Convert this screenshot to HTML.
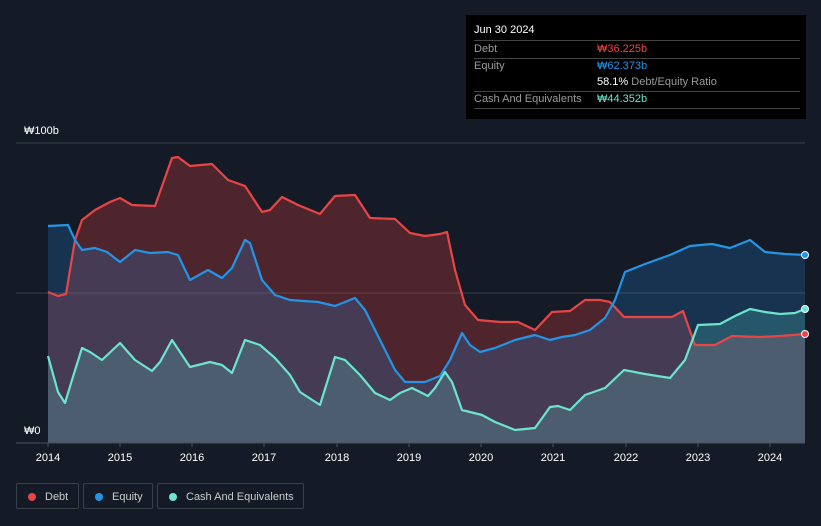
<!DOCTYPE html>
<html><head><meta charset="utf-8"><style>
body{margin:0;background:#151b26;width:821px;height:526px;overflow:hidden;font-family:"Liberation Sans","Noto Sans CJK KR",sans-serif;position:relative}
.tt{position:absolute;left:466px;top:15px;width:340px;height:104px;background:#000;color:#fff;font-size:11px}
.tt .r{position:absolute;left:8px;right:6px;border-bottom:1px solid #444;height:17px;line-height:17px}
.lbl{color:#9a9a9a}
.v{position:absolute;left:123px}
.ax{position:absolute;color:#fff;font-size:11px}
.lg{position:absolute;top:483px;height:26px;border:1px solid #3a404a;border-radius:2px;color:#ccc;font-size:11px;line-height:26px;box-sizing:border-box}
.lg i{position:absolute;left:11px;top:9px;width:8px;height:8px;border-radius:50%}
</style></head><body>
<svg width="821" height="526" style="position:absolute;left:0;top:0">
<line x1="16" y1="143" x2="805" y2="143" stroke="#3a404a"/>
<line x1="16" y1="293" x2="805" y2="293" stroke="#3a404a"/>
<path d="M48,292 L58,296 L66,294 L75,240 L82,220 L95,210 L110,202 L120,198 L132,205 L155,206 L172,158 L178,157 L190,166 L212,164 L228,180 L245,186 L262,212 L270,210 L282,197 L298,205 L320,214 L335,196 L355,195 L370,218 L395,219 L410,233 L425,236 L440,234 L447,232 L455,270 L465,305 L478,320 L500,322 L518,322 L535,330 L552,312 L570,311 L585,300 L600,300 L610,302 L624,317 L650,317 L672,317 L683,311 L695,345 L715,345 L732,336 L760,337 L780,336 L805,334 L805,443 L48,443Z" fill="rgba(226,66,66,0.28)"/>
<path d="M48,226 L68,225 L75,240 L82,250 L95,248 L107,252 L120,262 L135,250 L150,253 L168,252 L178,255 L190,280 L208,270 L222,278 L232,268 L245,240 L250,243 L262,280 L275,295 L290,300 L318,302 L335,306 L355,298 L365,310 L380,340 L395,370 L405,382 L425,382 L440,376 L450,360 L462,333 L470,345 L480,352 L495,348 L515,340 L535,335 L550,340 L562,337 L575,335 L590,330 L605,318 L615,300 L625,272 L645,264 L670,255 L690,246 L712,244 L730,248 L750,240 L765,252 L785,254 L805,255 L805,443 L48,443Z" fill="rgba(33,150,243,0.2)"/>
<path d="M48,356 L58,392 L65,403 L72,380 L82,348 L90,352 L102,360 L120,343 L135,360 L152,371 L160,362 L172,340 L180,352 L190,367 L210,362 L222,365 L232,373 L245,340 L260,345 L275,358 L290,375 L300,392 L320,405 L335,357 L345,360 L360,375 L375,393 L390,400 L400,393 L412,388 L428,396 L435,388 L445,372 L452,382 L462,410 L482,415 L495,422 L515,430 L535,428 L550,407 L558,406 L570,410 L585,395 L605,388 L624,370 L645,374 L670,378 L685,360 L698,325 L720,324 L735,316 L750,309 L765,312 L780,314 L795,313 L805,309 L805,443 L48,443Z" fill="rgba(100,230,210,0.2)"/>
<g fill="none" stroke-width="2.2" stroke-linejoin="round">
<path d="M48,292 L58,296 L66,294 L75,240 L82,220 L95,210 L110,202 L120,198 L132,205 L155,206 L172,158 L178,157 L190,166 L212,164 L228,180 L245,186 L262,212 L270,210 L282,197 L298,205 L320,214 L335,196 L355,195 L370,218 L395,219 L410,233 L425,236 L440,234 L447,232 L455,270 L465,305 L478,320 L500,322 L518,322 L535,330 L552,312 L570,311 L585,300 L600,300 L610,302 L624,317 L650,317 L672,317 L683,311 L695,345 L715,345 L732,336 L760,337 L780,336 L805,334" stroke="#e84545"/>
<path d="M48,226 L68,225 L75,240 L82,250 L95,248 L107,252 L120,262 L135,250 L150,253 L168,252 L178,255 L190,280 L208,270 L222,278 L232,268 L245,240 L250,243 L262,280 L275,295 L290,300 L318,302 L335,306 L355,298 L365,310 L380,340 L395,370 L405,382 L425,382 L440,376 L450,360 L462,333 L470,345 L480,352 L495,348 L515,340 L535,335 L550,340 L562,337 L575,335 L590,330 L605,318 L615,300 L625,272 L645,264 L670,255 L690,246 L712,244 L730,248 L750,240 L765,252 L785,254 L805,255" stroke="#2394e6"/>
<path d="M48,356 L58,392 L65,403 L72,380 L82,348 L90,352 L102,360 L120,343 L135,360 L152,371 L160,362 L172,340 L180,352 L190,367 L210,362 L222,365 L232,373 L245,340 L260,345 L275,358 L290,375 L300,392 L320,405 L335,357 L345,360 L360,375 L375,393 L390,400 L400,393 L412,388 L428,396 L435,388 L445,372 L452,382 L462,410 L482,415 L495,422 L515,430 L535,428 L550,407 L558,406 L570,410 L585,395 L605,388 L624,370 L645,374 L670,378 L685,360 L698,325 L720,324 L735,316 L750,309 L765,312 L780,314 L795,313 L805,309" stroke="#6ce4d0"/>
</g>
<rect x="16" y="420" width="32" height="22" fill="#151b26"/>
<line x1="16" y1="443" x2="805" y2="443" stroke="#4a505a"/>
<g stroke="#4a505a"><line x1="48" y1="443" x2="48" y2="447"/><line x1="120" y1="443" x2="120" y2="447"/><line x1="192" y1="443" x2="192" y2="447"/><line x1="264" y1="443" x2="264" y2="447"/><line x1="337" y1="443" x2="337" y2="447"/><line x1="409" y1="443" x2="409" y2="447"/><line x1="481" y1="443" x2="481" y2="447"/><line x1="553" y1="443" x2="553" y2="447"/><line x1="626" y1="443" x2="626" y2="447"/><line x1="698" y1="443" x2="698" y2="447"/><line x1="770" y1="443" x2="770" y2="447"/></g>
<circle cx="805" cy="334" r="3.5" fill="#e84545" stroke="#fff" stroke-width="1"/>
<circle cx="805" cy="255" r="3.5" fill="#2394e6" stroke="#fff" stroke-width="1"/>
<circle cx="805" cy="309" r="3.5" fill="#6ce4d0" stroke="#fff" stroke-width="1"/>
<g fill="#fff" font-size="11" text-anchor="middle" font-family="Liberation Sans, Noto Sans CJK KR, sans-serif">
<text x="48" y="461">2014</text><text x="120" y="461">2015</text><text x="192" y="461">2016</text><text x="264" y="461">2017</text><text x="337" y="461">2018</text><text x="409" y="461">2019</text><text x="481" y="461">2020</text><text x="553" y="461">2021</text><text x="626" y="461">2022</text><text x="698" y="461">2023</text><text x="770" y="461">2024</text>
</g>
</svg>
<div class="ax" style="left:24px;top:125px">₩100b</div>
<div class="ax" style="left:24px;top:425px">₩0</div>
<div class="tt">
<div style="position:absolute;left:8px;top:9px;font-size:11px">Jun 30 2024</div>
<div class="r" style="top:25px;border-top:1px solid #444"><span class="lbl">Debt</span><span class="v" style="color:#e84545">₩36.225b</span></div>
<div class="r" style="top:43px;border:none"><span class="lbl">Equity</span><span class="v" style="color:#2394e6">₩62.373b</span></div>
<div class="r" style="top:59px"><span class="v" style="left:123px"><b style="font-weight:normal;color:#fff">58.1%</b> <span class="lbl">Debt/Equity Ratio</span></span></div>
<div class="r" style="top:76px"><span class="lbl">Cash And Equivalents</span><span class="v" style="color:#6ce4d0">₩44.352b</span></div>
</div>
<div class="lg" style="left:16px;width:63px"><i style="background:#e84545"></i><span style="position:absolute;left:28px">Debt</span></div>
<div class="lg" style="left:83px;width:70px"><i style="background:#2394e6"></i><span style="position:absolute;left:28px">Equity</span></div>
<div class="lg" style="left:157px;width:147px"><i style="background:#6ce4d0"></i><span style="position:absolute;left:28px">Cash And Equivalents</span></div>
</body></html>
